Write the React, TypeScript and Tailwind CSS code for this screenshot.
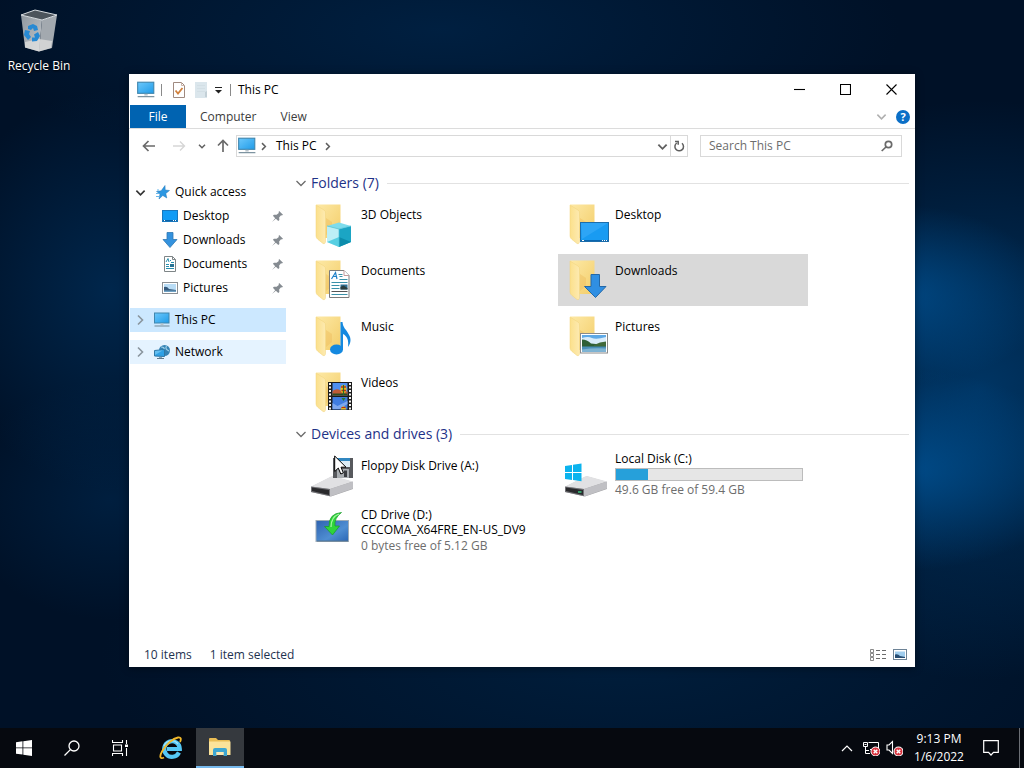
import type { ReactNode } from "react";

function Monitor({ className = "h-5 w-5" }: { className?: string }) {
  return (
    <svg viewBox="0 0 18 18" className={className} aria-hidden="true">
      <defs>
        <linearGradient id="screen" x1="0" y1="0" x2="1" y2="1">
          <stop offset="0" stopColor="#6cc8fb" />
          <stop offset="1" stopColor="#1f9be8" />
        </linearGradient>
      </defs>
      <rect x="1.5" y="2" width="14.5" height="10" fill="url(#screen)" stroke="#3f86ae" />
      <path d="M7.500 12.500h3V14h-3z" fill="#b9c4cb" />
      <path d="M1.500 15h15" stroke="#6e8795" />
    </svg>
  );
}

function Chevron({ dir, className = "h-3 w-3", width = 1.3 }: { dir: "down" | "right" | "up"; className?: string; width?: number }) {
  const d = { down: "M1.5 4l4.5 4.5L10.5 4", right: "M4 1.5l4.5 4.5L4 10.5", up: "M1 9l5-5 5 5" }[dir];
  return (
    <svg viewBox="0 0 12 12" className={className} fill="none" stroke="currentColor" strokeWidth={width} aria-hidden="true">
      <path d={d} />
    </svg>
  );
}

function Folder({ children }: { children?: ReactNode }) {
  return (
    <svg viewBox="0 0 48 48" className="h-12 w-12 overflow-visible" aria-hidden="true">
      <defs>
        <linearGradient id="fback" x1="0" y1="0" x2="1" y2="1">
          <stop offset="0" stopColor="#fde9a6" />
          <stop offset="1" stopColor="#f3cd69" />
        </linearGradient>
        <linearGradient id="fflap" x1="0" y1="0" x2="1" y2="0">
          <stop offset="0" stopColor="#fbe08b" />
          <stop offset="1" stopColor="#fdeab1" />
        </linearGradient>
      </defs>
      <path d="M4 4.500H28.500V38H12L5 6z" fill="url(#fback)" />
      <path d="M14 18l6 4v8l-6 5z" fill="#edbd5e" opacity=".45" />
      <path d="M4 5l8 5q1.500 1 1.500 3v28q0 3.500-2.500 2.500l-5-4Q4 38 4 36z" fill="url(#fflap)" stroke="#f0d27a" strokeWidth=".5" />
      {children}
    </svg>
  );
}

const overlays: Record<string, ReactNode> = {
  "3D Objects": (
    <g>
      <path d="M15 26l12 3v18l-12-5z" fill="#bdeff6" />
      <path d="M27 29l12-3v16l-12 5z" fill="#1ba5c4" />
      <path d="M15 26l12-3.500 12 3.500-12 3z" fill="#7edcec" />
      <path d="M15 42l12-5v10z" fill="#57cfe2" />
      <path d="M27 37l12 5-12 5z" fill="#0c8cab" />
      <path d="M15 26l12 3 12-3M27 29v18" fill="none" stroke="#4fc2d8" strokeWidth=".7" />
    </g>
  ),
  Desktop: (
    <g>
      <rect x="14.500" y="22.500" width="28" height="19" fill="#199bf2" stroke="#1c6dab" />
      <path d="M15 23h27L16 39z" fill="#3aacf8" opacity=".6" />
      <path d="M15 40.500h27" stroke="#0a65ae" />
      <path d="M16 40.500h2M36 40.500h1m1 0h1m1 0h1" stroke="#fff" />
    </g>
  ),
  Documents: (
    <g>
      <path d="M17.500 14.500H32l5 5V41.500H17.500z" fill="#fff" stroke="#7b7b7b" />
      <path d="M32 14.500v5h5" fill="#fff" stroke="#c49a9a" />
      <path d="M19.500 23l4-6.500 1.500 6.500M21 20.500h3.500" fill="none" stroke="#2182c9" strokeWidth="1.200" />
      <path d="M26.500 18.500h4M27.500 20.500h3M27.500 23.500h8M19.500 26.500h16M19.500 29.500h8M19.500 32.500h8M19.500 38.500h16" stroke="#3a91a9" />
      <path d="M19.500 35.500h16" stroke="#555" />
      <path d="M28.500 28.500h7v5h-7z" fill="#2f6f93" />
      <path d="M28.500 31l3-1.500 4 2.500v1.500h-7z" fill="#2d3d3d" />
    </g>
  ),
  Downloads: (
    <path d="M25 18.500h8.500v12h6.500L29.500 41.500 18.500 30.500H25z" fill="#2f8fe3" stroke="#2468a7" />
  ),
  Music: (
    <g fill="#1489e0">
      <ellipse cx="24.500" cy="37.500" rx="6.500" ry="5" />
      <path d="M28.500 10h2c.5 6 3.500 7 6 12 3 4.500 2.500 9-.5 13 1-7-1-11-5-13V38h-2.500z" />
    </g>
  ),
  Pictures: (
    <g>
      <rect x="14.500" y="21.500" width="27" height="19.500" fill="#fff" stroke="#8a8a8a" />
      <path d="M16 23h24v16.500H16z" fill="#5fa9e6" />
      <path d="M16 26q6-2 10 0t14-1v8H16z" fill="#d9ecfa" />
      <path d="M16 27.500q5 0 9 4l15 1.500v2H16z" fill="#2f5f35" />
      <path d="M28 33q6-3.500 12-3.500V34H28z" fill="#40693a" />
      <path d="M16 34.500h24v5H16z" fill="#4b8fb8" />
      <path d="M16 37.500q12-2 24-1v3H16z" fill="#7fb4d2" />
    </g>
  ),
  Videos: (
    <g>
      <rect x="16" y="14" width="24" height="28" fill="#1b1b1b" />
      <path d="M18 15v27M38 15v27" stroke="#f4f4f4" strokeWidth="2" strokeDasharray="2 1.500" />
      <rect x="20.500" y="15" width="15" height="12.500" fill="#4f8ff0" />
      <rect x="20.500" y="29" width="15" height="12.500" fill="#3f7ce0" />
      <path d="M20.500 23q4-3 8-.5t7 .5v4.500h-15z" fill="#bf5b36" />
      <path d="M20.500 25.500h15v2h-15z" fill="#2c4d23" />
      <path d="M20.500 35l5 3 10-5v3l-8 5h-7z" fill="#7da7ee" />
      <ellipse cx="31.500" cy="21" rx="3" ry="4" fill="#e8c51e" />
      <path d="M29 19h5M29.500 22.500h4.500" stroke="#c52b18" strokeWidth="1.300" />
      <path d="M31.500 17v10" stroke="#256b2a" strokeWidth="1.200" />
      <path d="M29.500 30h4l-2 3z" fill="#2c7a30" />
      <path d="M28.500 41.500q3-7 6 0z" fill="#e5b81d" />
      <path d="M29.500 39.500h4" stroke="#b92d1b" />
    </g>
  ),
};

function DriveBase({ led }: { led?: boolean }) {
  return (
    <g>
      <path d="M-1 36L19 26q2-1 4 0l18 5v7L19 45.500-1 41z" fill="#a5a5a8" />
      <path d="M-1 35.500L19 25.500q2-1 4 0L41 30.500 18 38z" fill="#e1e1e3" />
      <path d="M-1 35.500L18 38v7.300L-1 41z" fill="#707074" />
      <path d="M0 36.500l17 2.500v5L0 40z" fill="#29292c" />
      <path d="M18 38l23-7.500v7L18 45.500z" fill="#c0c0c4" />
      {led && <path d="M12 41h3.500" stroke="#3fe08d" strokeWidth="1.300" />}
    </g>
  );
}

function FloppyIcon() {
  return (
    <svg viewBox="0 0 48 48" className="h-12 w-12 overflow-visible" aria-hidden="true">
      <DriveBase />
      <path d="M21 7h20v20H21z" fill="#57595d" />
      <path d="M24 7h14v9H24z" fill="#dcebf4" />
      <path d="M24 7h14v3H24z" fill="#3187c0" />
      <path d="M25 18h12v9H25z" fill="#a9adb1" />
      <path d="M32 19.500h3V26h-3z" fill="#3c3e42" />
    </svg>
  );
}

function LocalDiskIcon() {
  return (
    <svg viewBox="0 0 48 48" className="h-12 w-12 overflow-visible" aria-hidden="true">
      <DriveBase led />
      <path d="M-1 15l7-1v7h-7zM7 13.800l8.500-1.300V21H7zM-1 22h7v7l-7-1zM7 22h8.500v8.300L7 29.100z" fill="#0bb3ee" />
    </svg>
  );
}

function CdIcon() {
  return (
    <svg viewBox="0 0 48 48" className="h-12 w-12 overflow-visible" aria-hidden="true">
      <defs>
        <linearGradient id="cd" x1="0" y1="0" x2="1" y2="1">
          <stop offset="0" stopColor="#2e62b0" />
          <stop offset=".6" stopColor="#4f8ed2" />
          <stop offset="1" stopColor="#2b66b5" />
        </linearGradient>
      </defs>
      <rect x="4" y="13.500" width="32.500" height="21" fill="url(#cd)" stroke="#9dabb7" />
      <path d="M5 34h31" stroke="#54728c" />
      <path d="M29.500 5.500q-13 1-12.500 14h-4.500l8 8.500 7-9h-4.500q-1-8 6.500-13.500z" fill="#2fd43c" stroke="#189a2a" strokeWidth=".7" />
      <path d="M27 7q-8 3-8 13" fill="none" stroke="#a4f5a0" strokeWidth="1.300" />
    </svg>
  );
}

const sideIcons: Record<string, ReactNode> = {
  Desktop: (
    <svg viewBox="0 0 16 16" className="h-4 w-4" aria-hidden="true">
      <rect x=".5" y="2.500" width="15" height="11" fill="#109bf5" stroke="#1877bd" />
      <path d="M1 12.500h14" stroke="#0c62a6" />
      <path d="M2 12.500h1M11 12.500h1m1 0h1" stroke="#fff" />
    </svg>
  ),
  Downloads: (
    <svg viewBox="0 0 16 16" className="h-4 w-4" aria-hidden="true">
      <path d="M5 .500h6v7h4L8 15.500 1 7.500h4z" fill="#3492de" stroke="#2d77b3" strokeWidth=".8" />
    </svg>
  ),
  Documents: (
    <svg viewBox="0 0 16 16" className="h-4 w-4" aria-hidden="true">
      <path d="M2.500.500h8l3 3v12h-11z" fill="#fff" stroke="#7e8587" />
      <path d="M10.500.500v3h3" fill="none" stroke="#7e8587" />
      <path d="M4 6l2-3.500L7 6M8 4.500h1M4 8.500h3M4 10.500h3M4 12.500h8M9 6.500h3" fill="none" stroke="#278fae" />
      <path d="M8 8h4v3H8z" fill="#287394" />
    </svg>
  ),
  Pictures: (
    <svg viewBox="0 0 16 16" className="h-4 w-4" aria-hidden="true">
      <rect x=".5" y="2.500" width="15" height="11" fill="#fff" stroke="#8b8f93" />
      <path d="M2 4h12v8H2z" fill="#b9dcf5" />
      <path d="M2 7q3-1 5 2l7 1v2H2z" fill="#35597c" />
      <path d="M2 10.500h12V12H2z" fill="#6fa2c4" />
    </svg>
  ),
};

function Pin() {
  return (
    <svg viewBox="1 1 10 10" className="h-[11px] w-[11px] text-[#858b91]" aria-hidden="true">
      <path d="M7.500 1L11 4.500l-1 .5-.8-.2-1.700 2 .2 2.400-1 1-2.200-2.100L1 11l2.900-3.500L1.800 5.300l1-1 2.400.2 2-1.700L7 2z" fill="currentColor" />
    </svg>
  );
}

function Star() {
  return (
    <svg viewBox="0 0 16 16" className="h-4 w-4" aria-hidden="true">
      <path d="M10 1.500L10.200 6l4.300.5-3.700 3 1 4.500-4-2.500L4 15l1-5-3.500-2.500 4.700-.7z" fill="#2c97e2" stroke="#2077b9" strokeWidth=".5" />
      <path d="M1 9.500h3M1 12.500h3.500M2 6h2" stroke="#69b7ea" />
    </svg>
  );
}

function NetworkIcon() {
  return (
    <svg viewBox="0 0 18 18" className="h-[18px] w-[18px]" aria-hidden="true">
      <circle cx="11.500" cy="7.500" r="5.500" fill="#3583b5" />
      <path d="M8 4q4 0 3 3M13.500 3q-2 3 2.500 5" fill="none" stroke="#9ed1ea" strokeWidth="1.200" />
      <path d="M1.500 7.500l10-1v7l-10-.5z" fill="#2ea1e6" stroke="#2f78a6" />
      <path d="M2 8l8-.8L2 12z" fill="#79cbf5" opacity=".7" />
      <path d="M6 14h3v1H6z" fill="#8ba3b2" />
      <path d="M4 15.500h7" stroke="#60798a" />
    </svg>
  );
}

function GroupHeader({ children }: { children: ReactNode }) {
  return (
    <div className="flex h-5 items-center">
      <button aria-label="Collapse group" className="text-[#6b6b6b]">
        <Chevron dir="down" />
      </button>
      <h2 className="ml-1 text-[14px] leading-5 text-[#1e3287]">{children}</h2>
      <span className="ml-2 h-px flex-1 bg-[#e2e2e2]" />
    </div>
  );
}

function Tile({ icon, selected, children }: { icon: ReactNode; selected?: boolean; children: ReactNode }) {
  return (
    <button className={`flex h-[52px] items-stretch pl-2 text-left leading-[15px] ${selected ? "bg-[#d9d9d9]" : ""}`}>
      <span className="w-[49px] shrink-0 pt-[2px]">{icon}</span>
      {children}
    </button>
  );
}

const folders = ["3D Objects", "Desktop", "Documents", "Downloads", "Music", "Pictures", "Videos"];

function Sidebar() {
  return (
    <nav className="w-[157px] shrink-0 pt-[17px] pl-px">
      <div className="flex h-6 items-center">
        <button aria-label="Collapse Quick access" className="ml-1 w-[21px] text-[#333]">
          <Chevron dir="down" width={1.8} className="ml-[1px] h-[11px] w-[11px]" />
        </button>
        <Star />
        <a href="#quick" className="ml-1">Quick access</a>
      </div>
      {["Desktop", "Downloads", "Documents", "Pictures"].map((name) => (
        <a key={name} href={`#${name}`} className="flex h-6 items-center pr-[3px] pl-8">
          {sideIcons[name]}
          <span className="ml-[5px] flex-1">{name}</span>
          <Pin />
        </a>
      ))}
      <a href="#pc" className="mt-2 flex h-6 items-center bg-[#cce8ff] pl-1">
        <span className="w-[19px] text-[#8a959e]"><Chevron dir="right" width={1.6} /></span>
        <Monitor className="h-[18px] w-[18px]" />
        <span className="ml-1">This PC</span>
      </a>
      <a href="#network" className="mt-2 flex h-6 items-center bg-[#e5f3ff] pl-1">
        <span className="w-[19px] text-[#8a959e]"><Chevron dir="right" width={1.6} /></span>
        <NetworkIcon />
        <span className="ml-1">Network</span>
      </a>
    </nav>
  );
}

function TitleBar() {
  return (
    <header className="flex h-[31px] items-center pr-px">
      <Monitor className="ml-[7px] h-5 w-5" />
      <span className="ml-[5px] h-3 w-px bg-[#8a8a8a]" />
      <button aria-label="Properties" className="ml-[10px]">
        <svg viewBox="0 0 14 16" className="h-4 w-[14px]">
          <path d="M1.500.500h8l3 3v12h-11z" fill="#fff" stroke="#a08a80" />
          <path d="M9.500.500v3h3" fill="none" stroke="#c8b3a8" />
          <path d="M3.500 8.500l2.500 3L10.500 6" fill="none" stroke="#d2813c" strokeWidth="1.800" />
        </svg>
      </button>
      <button aria-label="New folder" className="ml-2">
        <svg viewBox="0 0 14 16" className="h-4 w-[14px]">
          <path d="M1 0h12v16H1z" fill="#dbe6ec" />
          <path d="M3 3.500h8M3 6.500h8M3 9.500h8" stroke="#d3dfe5" />
          <path d="M11 15v-5l2-1v6z" fill="#c3d0d7" />
        </svg>
      </button>
      <button aria-label="Customize Quick Access Toolbar" className="ml-[6px]">
        <svg viewBox="0 0 9 9" className="h-[9px] w-[9px]">
          <path d="M1 2.500h7" stroke="#222" />
          <path d="M1 5h7L4.500 8.500z" fill="#222" />
        </svg>
      </button>
      <span className="ml-[7px] h-3 w-px bg-[#8a8a8a]" />
      <h1 className="ml-[7px] flex-1">This PC</h1>
      {[
        { label: "Minimize", d: "M0 5.500h11" },
        { label: "Maximize", d: "M.5.500h10v10H.5z" },
        { label: "Close", d: "M.500.500l10 10M10.500.500l-10 10" },
      ].map((b) => (
        <button key={b.label} aria-label={b.label} className="flex h-full w-[46px] items-center justify-center">
          <svg viewBox="0 0 11 11" className="h-[11px] w-[11px]" fill="none" stroke="#000" strokeWidth="1.100">
            <path d={b.d} />
          </svg>
        </button>
      ))}
    </header>
  );
}

function AddressRow() {
  return (
    <div className="flex h-[34px] items-center pr-[13px] text-[#5f5f5f]">
      <button aria-label="Back" className="ml-[13px]">
        <svg viewBox="0 0 14 12" className="h-3 w-[14px]" fill="none" stroke="#6a6a6a" strokeWidth="1.700"><path d="M13 6H1.500M6.500 1L1.500 6l5 5" /></svg>
      </button>
      <button aria-label="Forward" className="ml-4">
        <svg viewBox="0 0 14 12" className="h-3 w-[14px]" fill="none" stroke="#d6d6d6" strokeWidth="1.400"><path d="M1 6h11M8 1.500L12.500 6 8 10.500" /></svg>
      </button>
      <button aria-label="Recent locations" className="ml-3">
        <Chevron dir="down" width={2.2} className="h-2 w-2" />
      </button>
      <button aria-label="Up" className="ml-[11px]">
        <svg viewBox="0 0 12 14" className="h-[14px] w-3" fill="none" stroke="#6a6a6a" strokeWidth="1.700"><path d="M6 13v-11.500M1 6.500l5-5 5 5" /></svg>
      </button>
      <div className="ml-[7px] flex h-[22px] flex-1 items-center border border-[#d9d9d9]">
        <Monitor className="h-5 w-5" />
        <Chevron dir="right" width={2} className="ml-[2px] h-[9px] w-[9px]" />
        <span className="ml-2 text-black">This PC</span>
        <Chevron dir="right" width={2} className="ml-[6px] h-[9px] w-[9px]" />
        <button aria-label="Previous locations" className="mr-[2px] ml-auto">
          <Chevron dir="down" width={2} className="h-[11px] w-[11px]" />
        </button>
        <button aria-label="Refresh" className="flex h-full w-[17px] items-center justify-center border-l border-[#d9d9d9]">
          <svg viewBox="0 0 12 12" className="h-3 w-3" fill="none" stroke="#5f5f5f" strokeWidth="1.500">
            <path d="M3.800 3a4.300 4.300 0 1 0 5.200.3M2 1.500h3.200v3.300" />
          </svg>
        </button>
      </div>
      <div className="ml-3 flex h-[22px] w-[202px] items-center border border-[#d9d9d9] pr-2 pl-2">
        <input aria-label="Search This PC" placeholder="Search This PC" className="w-full min-w-0 outline-none placeholder:text-[#6d6d6d]" />
        <svg viewBox="0 0 12 12" className="h-3 w-3 shrink-0" fill="none" stroke="#6a6a6a" strokeWidth="1.700">
          <circle cx="7.500" cy="4.500" r="3.200" />
          <path d="M5 7L.7 11" />
        </svg>
      </div>
    </div>
  );
}

function ExplorerWindow() {
  return (
    <section className="flex min-w-0 flex-1 flex-col bg-white shadow-[0_1px_8px_rgba(0,0,0,0.4)]">
      <TitleBar />
      <div className="flex h-6 items-center border-b border-[#dcdcdc] pl-px text-[#3c3c3c]">
        <button className="h-full w-14 bg-[#0063b1] text-white">File</button>
        <button className="ml-[14px]">Computer</button>
        <button className="ml-6">View</button>
        <button aria-label="Expand the ribbon" className="mr-[9px] ml-auto text-[#b0b0b0]">
          <Chevron dir="down" width={1.7} className="h-[11px] w-[11px]" />
        </button>
        <button aria-label="Help" className="mr-[5px] flex h-[14px] w-[14px] items-center justify-center rounded-full bg-[#0b6fc7] text-[11px] font-bold text-white">?</button>
      </div>
      <AddressRow />
      <div className="flex flex-1">
        <Sidebar />
        <main className="min-w-0 flex-1 pt-[10px] pr-[6px] pl-[9px]">
          <GroupHeader>Folders (7)</GroupHeader>
          <div className="mt-[5px] ml-[9px] grid grid-cols-[repeat(auto-fill,250px)] gap-1">
            {folders.map((name) => (
              <Tile key={name} selected={name === "Downloads"} icon={<Folder>{overlays[name]}</Folder>}>
                <span className="pt-[9px]">{name}</span>
              </Tile>
            ))}
          </div>
          <div className="mt-[6px]">
            <GroupHeader>Devices and drives (3)</GroupHeader>
          </div>
          <div className="mt-[5px] ml-[9px] grid grid-cols-[repeat(auto-fill,250px)] gap-1">
            <Tile icon={<FloppyIcon />}>
              <span className="pt-[9px]">Floppy Disk Drive (A:)</span>
            </Tile>
            <Tile icon={<LocalDiskIcon />}>
              <span className="flex w-[188px] flex-col pt-[2px]">
                <span>Local Disk (C:)</span>
                <span className="mt-[2px] block h-[13px] border border-[#bcbcbc] bg-[#e6e6e6]">
                  <span className="block h-full w-[17%] bg-[#26a0da]" />
                </span>
                <span className="mt-px text-[#6d6d6d]">49.6 GB free of 59.4 GB</span>
              </span>
            </Tile>
            <Tile icon={<CdIcon />}>
              <span className="flex flex-col pt-[2px]">
                <span>CD Drive (D:)</span>
                <span>CCCOMA_X64FRE_EN-US_DV9</span>
                <span className="mt-px text-[#6d6d6d]">0 bytes free of 5.12 GB</span>
              </span>
            </Tile>
          </div>
        </main>
      </div>
      <footer className="flex h-6 items-center pr-2 pl-[15px] text-[#1e3250]">
        <span>10 items</span>
        <span className="ml-[18px] flex-1">1 item selected</span>
        <button aria-label="Details view">
          <svg viewBox="0 0 17 14" className="h-[14px] w-[17px]" fill="none" stroke="#6c6c6c">
            <path d="M.5 1.500h3v3h-3zM.5 5.500h3v3h-3zM.5 9.500h3v3h-3z" strokeWidth=".8" />
            <path d="M6 2.500h4M12 2.500h4M6 6.500h4M12 6.500h4M6 10.500h4M12 10.500h4" />
          </svg>
        </button>
        <button aria-label="Large icons view" className="ml-[6px]">
          <svg viewBox="0 0 14 12" className="h-3 w-[14px]">
            <rect x=".5" y=".5" width="13" height="10" fill="#fff" stroke="#6d8396" />
            <path d="M2 2.500h10V9H2z" fill="#9fcdee" />
            <path d="M2 5.500q3-1 5 1.500l5 1v1H2z" fill="#264d73" />
          </svg>
        </button>
      </footer>
    </section>
  );
}

function RecycleBin() {
  return (
    <button className="absolute top-2 left-0 flex w-[78px] flex-col items-center text-white">
      <svg viewBox="0 0 48 48" className="h-12 w-12" aria-hidden="true">
        <defs>
          <linearGradient id="bin" x1="0" y1="0" x2="1" y2="1">
            <stop offset="0" stopColor="#8f979f" />
            <stop offset="1" stopColor="#c3c7cb" />
          </linearGradient>
        </defs>
        <path d="M6 7l21 5-3 31.500-14-4z" fill="url(#bin)" />
        <path d="M27 12l15-5-5 33-13 3.500z" fill="#a3a9af" />
        <path d="M6 7l14-5 22 5-15 5z" fill="#4c545c" />
        <path d="M10 34l14-3 13 2-1 7-12 3.500-14-4z" fill="#e0e0df" opacity=".75" />
        <path d="M6 7l14-5 22 5-15 5z" fill="none" stroke="#d7dce0" />
        <g fill="#2789d3">
          <path d="M13 18l5-2 4 2 1 4-4 1-1-3-2 2-3-1z" />
          <path d="M10 22l5 1-1 3 2 3-3 3-4-5z" />
          <path d="M23 24l2 4-3 5-5 .500v-4h3l-1-3z" />
        </g>
      </svg>
      <span className="mt-[2px] [text-shadow:0_1px_2px_#000]">Recycle Bin</span>
    </button>
  );
}

function ErrorBadge() {
  return (
    <g>
      <circle cx="12.500" cy="11.500" r="4.500" fill="#d9343f" />
      <path d="M10.700 9.700l3.600 3.600M14.300 9.700l-3.600 3.600" stroke="#fff" strokeWidth="1.400" />
    </g>
  );
}

function Taskbar() {
  return (
    <footer className="flex h-10 items-stretch bg-[#06090f] text-white">
      <button aria-label="Start" className="flex w-12 items-center justify-center">
        <svg viewBox="0 0 16 16" className="h-4 w-4" fill="#fff"><path d="M0 2.200L6.500 1.300v6.200H0zM7.300 1.200L16 0v7.500H7.300zM0 8.300h6.500v6.300L0 13.700zM7.300 8.300H16V16l-8.700-1.200z" /></svg>
      </button>
      <button aria-label="Search" className="flex w-12 items-center justify-center">
        <svg viewBox="0 0 16 16" className="h-4 w-4" fill="none" stroke="#fff" strokeWidth="1.300"><circle cx="10" cy="6" r="5" /><path d="M6.400 9.600L.5 15.500" /></svg>
      </button>
      <button aria-label="Task view" className="flex w-12 items-center justify-center">
        <svg viewBox="0 0 16 16" className="h-4 w-4" fill="none" stroke="#fff" strokeWidth="1.100">
          <path d="M.5 0v2.500h10V0M1.500 5h8v6h-8zM.5 16v-2.500h10V16M14.500 0v4M14.500 8v8" />
          <path d="M13 4.500h3v2.500h-3z" fill="#fff" stroke="none" />
        </svg>
      </button>
      <button aria-label="Internet Explorer" className="flex w-[52px] items-center justify-center pl-px">
        <svg viewBox="0 0 24 24" className="h-6 w-6" fill="none">
          <path d="M20 16.500a7.800 7.800 0 1 1 .8-3.500H8" stroke="#55c8f5" strokeWidth="4.200" />
          <path d="M5 10a8 8 0 0 1 14-2" stroke="#a5e5fb" strokeWidth="1.200" />
          <path d="M5 21.500C1 23.500.2 20.500 3 15.500 7 8 14 2.500 19 1.500c3-.5 3.500 1.500 2 4.500" stroke="#f2b92b" strokeWidth="1.800" />
        </svg>
      </button>
      <button aria-label="File Explorer" className="flex w-12 items-center justify-center border-b-2 border-[#76b9ed] bg-[#35393e]">
        <svg viewBox="0 0 22 20" className="h-5 w-[22px]">
          <path d="M0 2q0-1 1-1h6l2 2h11q1 0 1 1v14H0z" fill="#e9bd55" />
          <path d="M0 4.500h21.500V18H0z" fill="#fbe39a" />
          <path d="M4 19v-6q0-2 2-2h10q2 0 2 2v6h-3.500v-4h-7v4z" fill="#3da6d1" />
          <path d="M7.500 15h7v3h-7z" fill="#fbe9b4" />
        </svg>
      </button>
      <div className="ml-auto flex items-center">
        <button aria-label="Show hidden icons"><Chevron dir="up" width={1.2} className="h-3 w-3" /></button>
        <button aria-label="Network, not connected" className="ml-[10px]">
          <svg viewBox="0 0 17 16" className="h-4 w-[17px]" fill="none" stroke="#fff">
            <path d="M5.500 2.500h10v7H7M.5 2.500h4v4h-4zM2.500 7v6.500H7M2.500 10.500H6M1.500 4.500h2" />
            <ErrorBadge />
          </svg>
        </button>
        <button aria-label="Volume, no device" className="ml-[6px]">
          <svg viewBox="0 0 17 16" className="h-4 w-[17px]" fill="none" stroke="#fff" strokeWidth="1.100">
            <path d="M1 5h2L6.500 1.500v12L3 10H1z" />
            <ErrorBadge />
          </svg>
        </button>
        <time className="ml-2 w-[56px] text-center leading-[18px]">
          <span className="block">9:13 PM</span>
          <span className="block">1/6/2022</span>
        </time>
        <button aria-label="Action center" className="ml-4">
          <svg viewBox="0 0 16 16" className="h-4 w-4" fill="none" stroke="#fff" strokeWidth="1.200"><path d="M.7.700h14.600v11.600H10.500L8 15l-2.500-2.700H.7z" /></svg>
        </button>
        <button aria-label="Show desktop" className="ml-5 h-10 w-[5px] border-l border-[#6b6f75]" />
      </div>
    </footer>
  );
}

export default function App() {
  return (
    <div className="flex min-h-screen cursor-default flex-col bg-[#001127] bg-[radial-gradient(ellipse_150px_90px_at_900px_295px,rgba(0,92,165,0.6),transparent),radial-gradient(ellipse_170px_100px_at_910px_470px,rgba(0,92,165,0.65),transparent),radial-gradient(ellipse_300px_290px_at_980px_390px,rgba(0,62,115,0.8),transparent),radial-gradient(ellipse_520px_180px_at_620px_660px,rgba(0,42,80,0.5),transparent),radial-gradient(ellipse_460px_150px_at_440px_30px,rgba(0,46,90,0.5),transparent),radial-gradient(ellipse_170px_200px_at_110px_290px,rgba(0,50,96,0.65),transparent),radial-gradient(ellipse_150px_120px_at_110px_500px,rgba(0,44,86,0.5),transparent)] font-['Open_Sans','Noto_Sans',sans-serif] text-[12px] leading-4 text-black">
      <div className="relative flex flex-1 pt-[74px] pr-[109px] pb-[61px] pl-[129px]">
        <RecycleBin />
        <ExplorerWindow />
        <svg viewBox="0 0 13 20" className="pointer-events-none absolute top-[455px] left-[334px] h-5 w-[13px]" aria-hidden="true">
          <path d="M.7 1v15.500l3.600-3.400 2.500 5.900 2.600-1.100L7 12.200h5z" fill="#fff" stroke="#000" />
        </svg>
      </div>
      <Taskbar />
    </div>
  );
}
